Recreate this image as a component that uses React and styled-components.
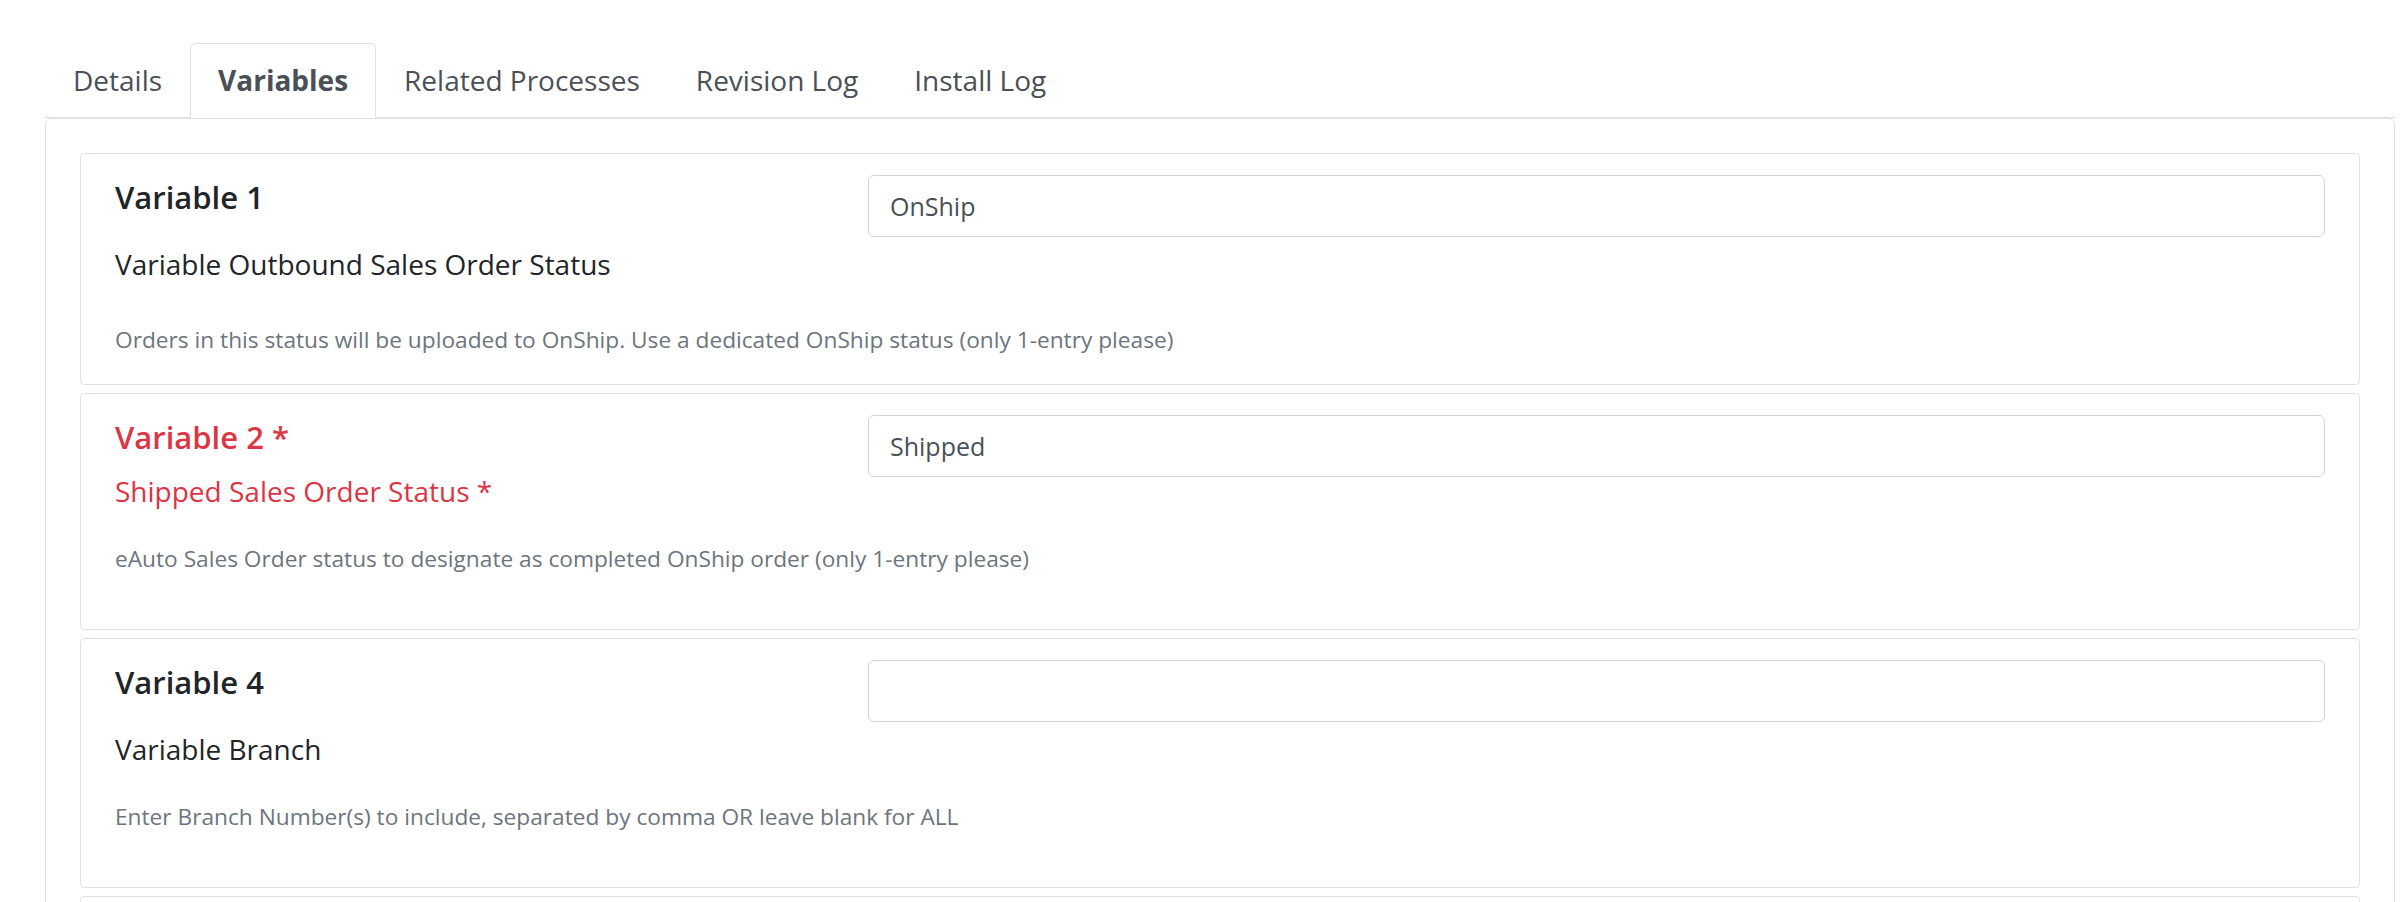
import React from "react";
import styled, { createGlobalStyle } from "styled-components";

const GlobalStyle = createGlobalStyle`
  html, body {
    margin: 0;
    padding: 0;
    background: #ffffff;
  }
  body {
    font-family: "Open Sans", "Noto Sans", sans-serif;
    color: #212529;
  }
`;

const tabs = ["Details", "Variables", "Related Processes", "Revision Log", "Install Log"];

const variables = [
  {
    title: "Variable 1",
    label: "Variable Outbound Sales Order Status",
    value: "OnShip",
    help: "Orders in this status will be uploaded to OnShip. Use a dedicated OnShip status (only 1-entry please)",
    labelGap: 25,
    descGap: 39,
    padBottom: 28,
  },
  {
    title: "Variable 2 *",
    label: "Shipped Sales Order Status *",
    value: "Shipped",
    help: "eAuto Sales Order status to designate as completed OnShip order (only 1-entry please)",
    required: true,
    labelGap: 12,
    descGap: 31,
    padBottom: 54,
  },
  {
    title: "Variable 4",
    label: "Variable Branch",
    value: "",
    help: "Enter Branch Number(s) to include, separated by comma OR leave blank for ALL",
    labelGap: 25,
    descGap: 31,
    padBottom: 54,
  },
];

export default function App() {
  return (
    <>
      <GlobalStyle />
      <Page>
        <TabBar>
          {tabs.map((t) => (
            <Tab key={t} $active={t === "Variables"}>
              {t}
            </Tab>
          ))}
        </TabBar>
        <Panel>
          {variables.map((v) => (
            <Card key={v.title} $padBottom={v.padBottom}>
              <Row>
                <LabelCol>
                  <Title $required={v.required}>{v.title}</Title>
                  <FieldLabel $required={v.required} $gap={v.labelGap}>
                    {v.label}
                  </FieldLabel>
                </LabelCol>
                <Input type="text" defaultValue={v.value} />
              </Row>
              <Help $gap={v.descGap}>{v.help}</Help>
            </Card>
          ))}
          {/* next variable card, only its top edge is in view */}
          <Card $padBottom={54} $minHeight={230} />
        </Panel>
      </Page>
    </>
  );
}

const Page = styled.div`
  height: 902px;
  overflow: hidden;
  box-sizing: border-box;
  padding: 43px 9px 0 45px;
`;

const TabBar = styled.nav`
  display: flex;
  border-bottom: 1px solid #dee2e6;
`;

const Tab = styled.div`
  font-size: 28px;
  line-height: 41px;
  padding: 16px 27px;
  margin-bottom: -1px;
  border: 1px solid ${(p) => (p.$active ? "#dee2e6" : "transparent")};
  border-bottom-color: ${(p) => (p.$active ? "#ffffff" : "transparent")};
  border-radius: 6px 6px 0 0;
  background: ${(p) => (p.$active ? "#ffffff" : "transparent")};
  color: #495057;
  font-weight: ${(p) => (p.$active ? 700 : 400)};
  cursor: pointer;
`;

const Panel = styled.div`
  border: 1px solid #dee2e6;
  border-radius: 6px;
  padding: 34px;
  display: flex;
  flex-direction: column;
  gap: 8px;
`;

const Card = styled.div`
  flex-shrink: 0;
  min-height: ${(p) => p.$minHeight || 0}px;
  border: 1px solid #dee2e6;
  border-radius: 4px;
  padding: 21px 34px ${(p) => p.$padBottom}px 34px;
`;

const Row = styled.div`
  display: grid;
  grid-template-columns: 753px 1fr;
  align-items: start;
`;

const LabelCol = styled.div`
  display: flex;
  flex-direction: column;
`;

const Title = styled.h5`
  margin: 0;
  font-size: 31px;
  line-height: 44px;
  font-weight: 600;
  color: ${(p) => (p.$required ? "#dc3545" : "#212529")};
`;

const FieldLabel = styled.label`
  margin-top: ${(p) => p.$gap}px;
  font-size: 28px;
  line-height: 40px;
  color: ${(p) => (p.$required ? "#dc3545" : "#212529")};
`;

const Input = styled.input`
  box-sizing: border-box;
  width: 100%;
  height: 62px;
  border: 1px solid #ced4da;
  border-radius: 6px;
  padding: 0 21px;
  font-family: "Open Sans", "Noto Sans", sans-serif;
  font-size: 25px;
  color: #495057;
  background: #ffffff;
  outline: none;
`;

const Help = styled.small`
  display: block;
  margin-top: ${(p) => p.$gap}px;
  font-size: 22.7px;
  line-height: 33px;
  color: #6c757d;
`;
